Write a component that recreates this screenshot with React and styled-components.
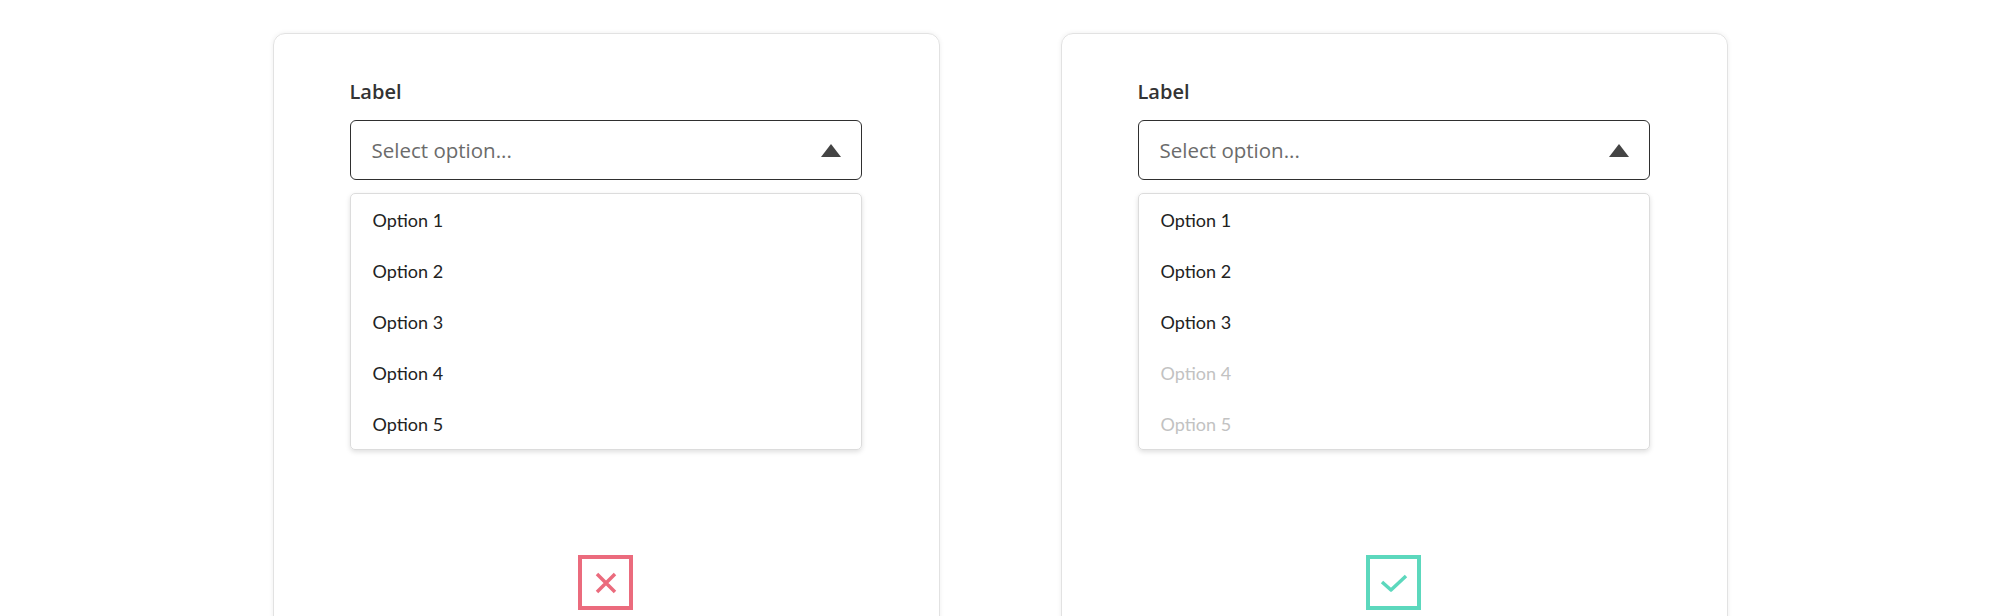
import React from "react";
import styled, { createGlobalStyle } from "styled-components";

const GlobalStyle = createGlobalStyle`
    body {
        margin: 0;
        background: #ffffff;
        font-family: "Open Sans", "Liberation Sans", sans-serif;
    }
`;

const Page = styled.div`
    display: flex;
    justify-content: center;
    gap: 121px;
    padding-top: 33px;
    height: 583px;
    overflow: hidden;
`;

const Card = styled.div`
    box-sizing: border-box;
    width: 667px;
    height: 640px;
    padding: 46px 77px 0 76px;
    border: 1px solid #e2e2e2;
    border-radius: 12px;
    box-shadow: 0 0 5px rgba(0, 0, 0, 0.07);
    display: flex;
    flex-direction: column;
`;

const Label = styled.div`
    font-family: "Open Sans", sans-serif;
    font-weight: 600;
    font-size: 20px;
    line-height: 24px;
    color: #333333;
    margin-bottom: 16px;
`;

const SelectBox = styled.div`
    box-sizing: border-box;
    height: 60px;
    border: 1.5px solid #2f2f2f;
    border-radius: 6px;
    display: flex;
    align-items: center;
    justify-content: space-between;
    padding: 0 20px 0 21px;
`;

const Placeholder = styled.span`
    font-family: "Open Sans", sans-serif;
    font-size: 20.5px;
    color: #6b6b6b;
`;

const Dropdown = styled.div`
    margin-top: 13px;
    border: 1px solid #dcdcdc;
    border-radius: 5px;
    box-shadow: 0 2px 5px rgba(0, 0, 0, 0.13);
    display: flex;
    flex-direction: column;
`;

const Option = styled.div`
    height: 51px;
    display: flex;
    align-items: center;
    padding-left: 22px;
    font-family: Lato, "Noto Sans", sans-serif;
    font-size: 18px;
    color: ${(p) => (p.disabled ? "#c2c2c2" : "#222222")};
`;

const IconBox = styled.div`
    box-sizing: border-box;
    align-self: center;
    margin-top: 105px;
    width: 55px;
    height: 55px;
    border: 4px solid ${(p) => p.color};
    display: flex;
    align-items: center;
    justify-content: center;
`;

const Caret = () => (
    <svg width="20" height="13" viewBox="0 0 20 13">
        <path d="M10 0 L20 13 L0 13 Z" fill="#444444" />
    </svg>
);

const CrossIcon = ({ color }) => (
    <svg width="22" height="22" viewBox="0 0 22 22">
        <path d="M2 2 L20 20 M20 2 L2 20" stroke={color} strokeWidth="3.5" />
    </svg>
);

const CheckIcon = ({ color }) => (
    <svg width="28" height="20" viewBox="0 0 28 20">
        <path d="M2 9 L11 17 L26 3" stroke={color} strokeWidth="3.5" fill="none" strokeLinejoin="round" />
    </svg>
);

const options = ["Option 1", "Option 2", "Option 3", "Option 4", "Option 5"];

const Example = ({ disabledFrom, good }) => {
    const color = good ? "#5cd8bd" : "#eb6b7d";
    return (
        <Card>
            <Label>Label</Label>
            <SelectBox>
                <Placeholder>Select option...</Placeholder>
                <Caret />
            </SelectBox>
            <Dropdown>
                {options.map((o, i) => (
                    <Option key={o} disabled={disabledFrom !== undefined && i >= disabledFrom}>
                        {o}
                    </Option>
                ))}
            </Dropdown>
            <IconBox color={color}>
                {good ? <CheckIcon color={color} /> : <CrossIcon color={color} />}
            </IconBox>
        </Card>
    );
};

const App = () => (
    <>
        <GlobalStyle />
        <Page>
            <Example good={false} />
            <Example good disabledFrom={3} />
        </Page>
    </>
);

export default App;
